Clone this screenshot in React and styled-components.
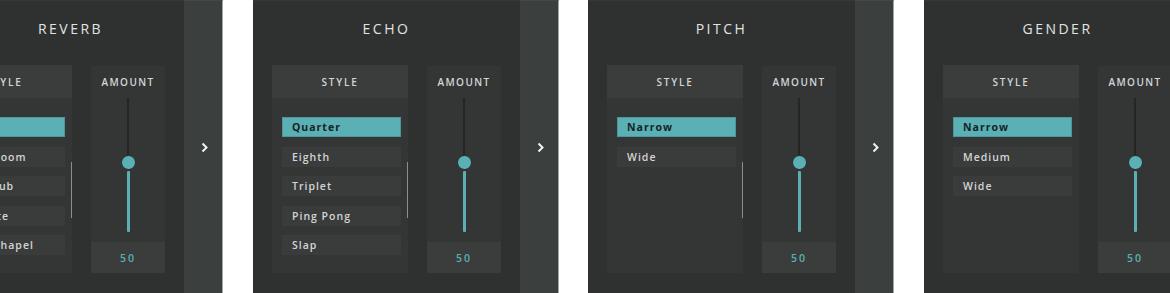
import React from "react";
import styled, { createGlobalStyle } from "styled-components";

const Global = createGlobalStyle`
  html, body { margin: 0; padding: 0; background: #ffffff; }
  body { font-family: "Open Sans", "DejaVu Sans", sans-serif; }
`;

const Row = styled.div`
  display: flex;
  height: 293px;
  width: 1170px;
  overflow: hidden;
  background: #ffffff;
`;

const Slot = styled.div`
  flex: none;
  width: ${(p) => p.$width}px;
  margin-left: ${(p) => p.$gap || 0}px;
  height: 293px;
  overflow: hidden;
  display: flex;
`;

const Panel = styled.div`
  flex: none;
  display: flex;
  height: 293px;
  margin-left: ${(p) => p.$shift || 0}px;
`;

const Main = styled.div`
  width: 267px;
  height: 293px;
  background: #2e3130;
  border-top: 1px solid #353837;
  box-sizing: border-box;
  display: flex;
  flex-direction: column;
`;

const Strip = styled.div`
  width: 38px;
  height: 293px;
  background: #3b3f3d;
  border-top: 1px solid #434745;
  border-right: 1px solid #a3a6a5;
  box-sizing: content-box;
  display: flex;
  align-items: center;
  justify-content: center;
`;

const Chevron = styled.svg`
  width: 8px;
  height: 11px;
  margin-left: 3px;
  margin-top: -1px;
`;

const Title = styled.div`
  height: 57px;
  line-height: 55px;
  text-align: center;
  padding-left: ${(p) => p.$offset || 0}px;
  font-size: 14px;
  letter-spacing: 2.5px;
  color: #e2e4e4;
  font-weight: 400;
`;

const Body = styled.div`
  margin-top: 7px;
  padding: 0 19px;
  display: flex;
  gap: 19px;
  height: 208px;
`;

const StyleBox = styled.div`
  width: 136px;
  display: flex;
  flex-direction: column;
  background: #343635;
`;

const BoxHeader = styled.div`
  height: 33px;
  flex: none;
  display: flex;
  align-items: center;
  justify-content: center;
  background: ${(p) => (p.$tinted ? "#3a3d3c" : "transparent")};
  font-size: 10px;
  font-weight: 600;
  letter-spacing: 1.8px;
  color: #d3d5d5;
`;

const ListArea = styled.div`
  flex: 1;
  display: flex;
`;

const List = styled.div`
  flex: 1;
  display: flex;
  flex-direction: column;
  gap: 9.5px;
  padding: 19px 0 0 10px;
`;

const Item = styled.div`
  height: 20px;
  box-sizing: border-box;
  padding-left: 9px;
  display: flex;
  align-items: center;
  white-space: nowrap;
  overflow: hidden;
  font-size: 10.5px;
  font-weight: ${(p) => (p.$active ? 700 : 600)};
  letter-spacing: 1px;
  color: ${(p) => (p.$active ? "#182223" : "#d3d5d5")};
  background: ${(p) => (p.$active ? "#5ab0b5" : "#3a3c3b")};
  border: 1px solid ${(p) => (p.$active ? "#4c989d" : "#3a3c3b")};
`;

const ScrollBar = styled.div`
  width: 1.5px;
  height: 56px;
  margin: 64px 0 0 6px;
  background: ${(p) => (p.$visible ? "#8b8e8d" : "transparent")};
`;

const AmountBox = styled.div`
  width: 74px;
  margin-top: 1px;
  display: flex;
  flex-direction: column;
  background: #343635;
`;

const AmountHeader = styled(BoxHeader)`
  height: 32px;
  letter-spacing: 1.4px;
`;

const SliderArea = styled.div`
  height: 144px;
  display: flex;
  flex-direction: column;
  align-items: center;
`;

const TrackTop = styled.div`
  width: 2px;
  height: 57px;
  background: #232625;
`;

const Thumb = styled.div`
  width: 15px;
  height: 15px;
  box-sizing: border-box;
  border-radius: 50%;
  background: #5ab0b5;
  border: 1px solid #262928;
  flex: none;
`;

const TrackBottom = styled.div`
  width: 3px;
  height: 61px;
  margin-top: 1px;
  background: #5ab0b5;
  border-radius: 1px;
`;

const ValueBox = styled.div`
  height: 31px;
  display: flex;
  align-items: center;
  justify-content: center;
  background: #3a3d3c;
  font-size: 10.5px;
  font-weight: 600;
  letter-spacing: 2px;
  color: #5ab0b5;
`;

function Effect({ title, items, titleOffset, scroll }) {
  return (
    <Main>
      <Title $offset={titleOffset}>{title}</Title>
      <Body>
        <StyleBox>
          <BoxHeader $tinted>STYLE</BoxHeader>
          <ListArea>
            <List>
              {items.map((it, i) => (
                <Item key={it} $active={i === 0}>
                  {it}
                </Item>
              ))}
            </List>
            <ScrollBar $visible={scroll} />
          </ListArea>
        </StyleBox>
        <AmountBox>
          <AmountHeader>AMOUNT</AmountHeader>
          <SliderArea>
            <TrackTop />
            <Thumb />
            <TrackBottom />
          </SliderArea>
          <ValueBox>50</ValueBox>
        </AmountBox>
      </Body>
    </Main>
  );
}

function Next() {
  return (
    <Strip>
      <Chevron viewBox="0 0 8 11">
        <polyline
          points="1.5,1.5 5.5,5.5 1.5,9.5"
          fill="none"
          stroke="#f2f3f3"
          strokeWidth="2"
        />
      </Chevron>
    </Strip>
  );
}

const slides = [
  {
    title: "REVERB",
    items: ["Hall", "Large Room", "Nightclub", "Tin Plate", "Large Chapel"],
    width: 223,
    gap: 0,
    shift: -83,
    titleOffset: 40,
    scroll: true,
  },
  {
    title: "ECHO",
    items: ["Quarter", "Eighth", "Triplet", "Ping Pong", "Slap"],
    width: 306,
    gap: 30,
    shift: 0,
    scroll: true,
  },
  {
    title: "PITCH",
    items: ["Narrow", "Wide"],
    width: 306,
    gap: 29,
    shift: 0,
    scroll: true,
  },
  {
    title: "GENDER",
    items: ["Narrow", "Medium", "Wide"],
    width: 246,
    gap: 30,
    shift: 0,
    scroll: false,
  },
];

export default function App() {
  return (
    <>
      <Global />
      <Row>
        {slides.map((s) => (
          <Slot key={s.title} $width={s.width} $gap={s.gap}>
            <Panel $shift={s.shift}>
              <Effect
                title={s.title}
                items={s.items}
                titleOffset={s.titleOffset}
                scroll={s.scroll}
              />
              <Next />
            </Panel>
          </Slot>
        ))}
      </Row>
    </>
  );
}
